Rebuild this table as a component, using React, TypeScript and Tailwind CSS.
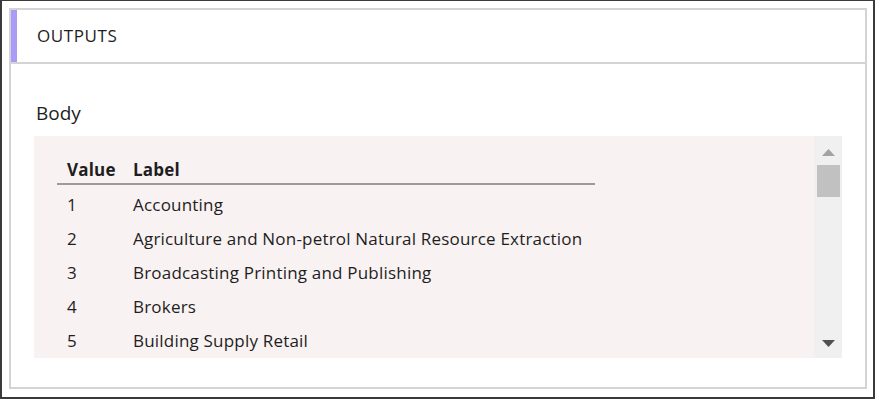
import React from "react";

const rows: [string, string][] = [
  ["1", "Accounting"],
  ["2", "Agriculture and Non-petrol Natural Resource Extraction"],
  ["3", "Broadcasting Printing and Publishing"],
  ["4", "Brokers"],
  ["5", "Building Supply Retail"],
];

const font = { fontFamily: '"Open Sans", "Noto Sans", Arial, sans-serif' };

export default function App() {
  return (
    <div
      className="w-[875px] h-[399px] bg-white border-t border-x-2 border-b-2 border-[#3a3a3a] pt-[7px] pl-[7px] pr-[6px] pb-[8px] text-[#1e1e1e]"
      style={font}
    >
      <div className="h-full border-2 border-[#d4d4d4] flex flex-col">
        {/* section header with accent bar */}
        <div className="h-[54px] flex items-stretch border-b-2 border-[#d4d4d4] shrink-0">
          <div className="w-[6px] bg-[#a99cf6]" />
          <div className="flex items-center pl-[20px] text-[17px] tracking-[0.6px] leading-[24px]">OUTPUTS</div>
        </div>

        <div className="flex-1 flex flex-col px-[23px] pb-[30px]">
          <div className="mt-[36px] h-[26px] pl-[2px] text-[19px] leading-[26px]">Body</div>

          <div className="mt-[10px] flex-1 flex bg-[#f9f2f2]">
            <div className="flex-1 pl-[23px] pt-[18px] overflow-hidden">
              <table className="table-fixed border-collapse text-[17px] tracking-[0.2px] w-[538px]">
                <thead>
                  <tr className="border-b-2 border-[#9c9c9c]">
                    <th className="w-[66px] text-left font-bold h-[30px] pt-[3px] px-[10px] align-middle leading-[24px]">Value</th>
                    <th className="text-left font-bold h-[30px] pt-[3px] pl-[10px] align-middle leading-[24px]">Label</th>
                  </tr>
                </thead>
                <tbody>
                  {rows.map(([v, l], i) => (
                    <tr key={v}>
                      <td className={`px-[10px] align-middle leading-[24px] ${i === 0 ? "h-[38px] pt-[3px]" : "h-[34px]"}`}>{v}</td>
                      <td className={`pl-[10px] align-middle whitespace-nowrap leading-[24px] ${i === 0 ? "pt-[3px]" : ""}`}>{l}</td>
                    </tr>
                  ))}
                </tbody>
              </table>
            </div>

            {/* scrollbar */}
            <div className="w-[28px] bg-[#f0f0f0] flex flex-col items-center shrink-0">
              <svg width="13" height="7" viewBox="0 0 13 7" className="mt-[13px]">
                <polygon points="0,7 13,7 6.5,0" fill="#a3a3a3" />
              </svg>
              <div className="mt-[9px] w-[23px] h-[32px] bg-[#c1c1c1]" />
              <div className="flex-1" />
              <svg width="13" height="7" viewBox="0 0 13 7" className="mb-[11px]">
                <polygon points="0,0 13,0 6.5,7" fill="#505050" />
              </svg>
            </div>
          </div>
        </div>
      </div>
    </div>
  );
}
